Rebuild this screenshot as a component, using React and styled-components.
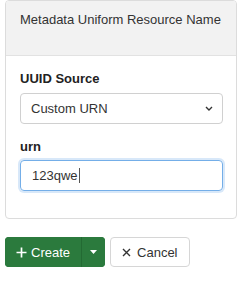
import React from 'react';
import styled, { createGlobalStyle } from 'styled-components';

const GlobalStyle = createGlobalStyle`
  body {
    margin: 0;
    background: #fff;
    font-family: "Liberation Sans", Arial, Helvetica, sans-serif;
    color: #333;
  }
`;

const Page = styled.div`
  padding: 0 13px 0 5px;
`;

const Panel = styled.div`
  border: 1px solid #dcdcdc;
  border-radius: 4px;
  background: #fff;
  overflow: hidden;
`;

const PanelHeading = styled.div`
  height: 44px;
  padding: 10px 14px 0;
  background: #f2f2f2;
  border-bottom: 1px solid #e2e2e2;
  font-size: 13px;
  line-height: 18px;
  color: #333;
`;

const PanelBody = styled.div`
  padding: 14px 13px 13px 14px;
`;

const Group = styled.div`
  margin-bottom: 14px;
`;

const Label = styled.label`
  display: block;
  font-size: 13px;
  line-height: 18px;
  font-weight: bold;
  color: #222;
  margin-bottom: ${p => p.$gap || 5}px;
`;

const SelectWrap = styled.div`
  position: relative;
`;

const Select = styled.select`
  display: block;
  width: 100%;
  height: 31px;
  padding: 0 24px 0 10px;
  border: 1px solid #d0d0d0;
  border-radius: 4px;
  background: #fff;
  font-family: inherit;
  font-size: 13px;
  color: #333;
  appearance: none;
  box-sizing: border-box;
`;

const Chevron = styled.svg`
  position: absolute;
  right: 10px;
  top: 13px;
  pointer-events: none;
`;

const TextBox = styled.div`
  display: flex;
  align-items: center;
  height: 31px;
  padding: 0 11px;
  border: 1px solid #74aee8;
  border-radius: 4px;
  box-shadow: 0 0 0 2px rgba(116, 174, 232, 0.28);
  font-size: 13px;
  color: #333;
  box-sizing: border-box;
`;

const Caret = styled.span`
  display: inline-block;
  width: 1px;
  height: 15px;
  margin-left: 1px;
  background: #555;
`;

const Actions = styled.div`
  display: flex;
  gap: 5px;
  margin-top: 18px;
`;

const SplitButton = styled.div`
  display: flex;
  height: 30px;
  border-radius: 4px;
  overflow: hidden;
  background: #2b7a3d;
`;

const Button = styled.button`
  display: flex;
  align-items: center;
  gap: ${p => p.$gap || 5}px;
  height: 30px;
  padding: 0 ${p => p.$pad || 12}px;
  border: none;
  font-family: inherit;
  font-size: 13px;
  cursor: pointer;
  box-sizing: border-box;
`;

const CreateButton = styled(Button)`
  background: #2b7a3d;
  color: #fff;
`;

const CaretButton = styled(Button)`
  background: #2b7a3d;
  border-left: 1px solid #236a33;
  width: 24px;
  justify-content: center;
  padding: 0;
`;

const CancelButton = styled(Button)`
  background: #fff;
  color: #333;
  border: 1px solid #d6d6d6;
  border-radius: 4px;
`;

const App = () => (
  <Page>
    <GlobalStyle />
    <Panel>
      <PanelHeading>Metadata Uniform Resource Name</PanelHeading>
      <PanelBody>
        <Group>
          <Label htmlFor="source">UUID Source</Label>
          <SelectWrap>
            <Select id="source" defaultValue="custom">
              <option value="custom">Custom URN</option>
            </Select>
            <Chevron width="8" height="5" viewBox="0 0 8 5">
              <path d="M1 1l3 3 3-3" fill="none" stroke="#333" strokeWidth="1.4" />
            </Chevron>
          </SelectWrap>
        </Group>
        <Group>
          <Label $gap={4}>urn</Label>
          <TextBox>
            123qwe<Caret />
          </TextBox>
        </Group>
      </PanelBody>
    </Panel>
    <Actions>
      <SplitButton>
        <CreateButton $pad={11} $gap={4}>
          <svg width="11" height="11" viewBox="0 0 11 11">
            <path d="M5.5 0.5v10M0.5 5.5h10" stroke="#fff" strokeWidth="1.7" />
          </svg>
          Create
        </CreateButton>
        <CaretButton>
          <svg width="7" height="4" viewBox="0 0 7 4">
            <path d="M0 0h7L3.5 4z" fill="#fff" />
          </svg>
        </CaretButton>
      </SplitButton>
      <CancelButton $pad={11} $gap={6}>
        <svg width="9" height="9" viewBox="0 0 9 9">
          <path d="M1 1l7 7M8 1l-7 7" stroke="#333" strokeWidth="1.4" />
        </svg>
        Cancel
      </CancelButton>
    </Actions>
  </Page>
);

export default App;
